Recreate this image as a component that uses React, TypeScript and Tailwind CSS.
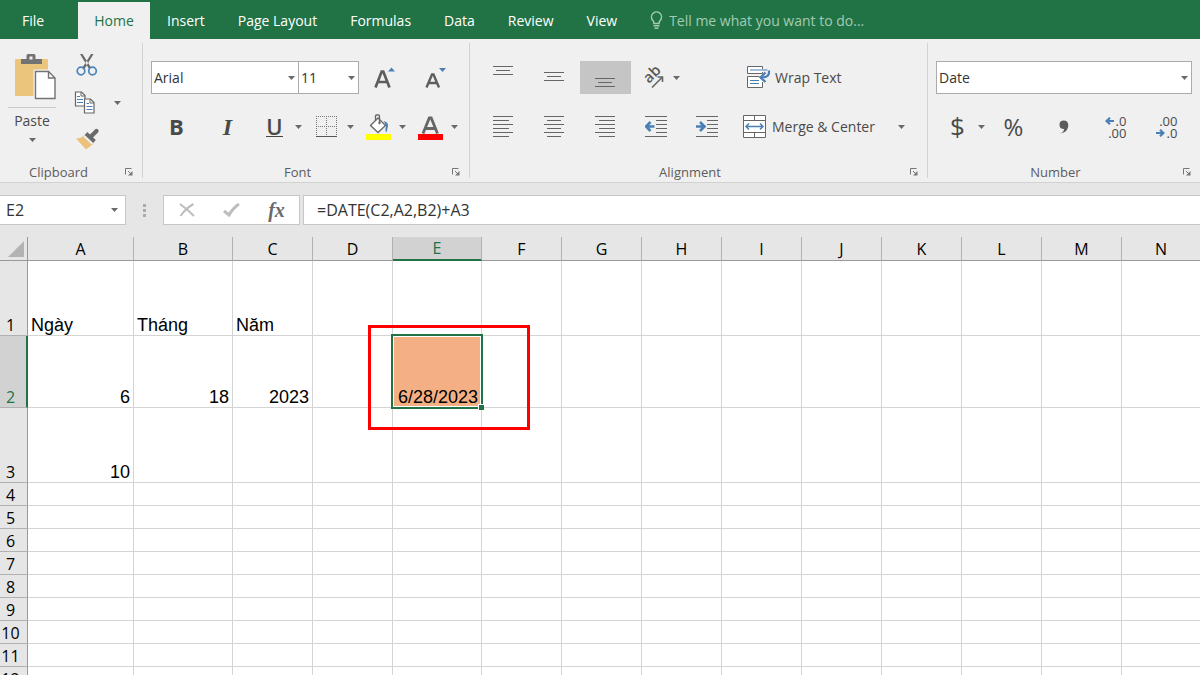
import type { ReactNode } from "react";
import clsx from "clsx";

const tabs = ["Insert", "Page Layout", "Formulas", "Data", "Review", "View"];

const columns = [
  { name: "A", width: "w-[106px]" },
  { name: "B", width: "w-[99px]" },
  { name: "C", width: "w-[80px]" },
  { name: "D", width: "w-[80px]" },
  { name: "E", width: "w-[89px]" },
  { name: "F", width: "w-[80px]" },
  { name: "G", width: "w-[80px]" },
  { name: "H", width: "w-[80px]" },
  { name: "I", width: "w-[80px]" },
  { name: "J", width: "w-[80px]" },
  { name: "K", width: "w-[80px]" },
  { name: "L", width: "w-[80px]" },
  { name: "M", width: "w-[80px]" },
  { name: "N", width: "" },
];

const cells: Record<string, string> = {
  A1: "Ngày",
  B1: "Tháng",
  C1: "Năm",
  A2: "6",
  B2: "18",
  C2: "2023",
  E2: "6/28/2023",
  A3: "10",
};

const rowHeights: Record<number, string> = {
  1: "h-[75px]",
  2: "h-[72px]",
  3: "h-[75px]",
};

function Caret() {
  return (
    <svg width="7" height="4" viewBox="0 0 7 4" className="shrink-0" aria-hidden="true">
      <path d="M0 0h7L3.5 4z" fill="#6a6a6a" />
    </svg>
  );
}

function IconButton({ label, active, children }: { label: string; active?: boolean; children: ReactNode }) {
  return (
    <button
      type="button"
      aria-label={label}
      className={clsx("flex h-[33px] w-[51px] shrink-0 items-center justify-center", active && "bg-[#c5c5c5]")}
    >
      {children}
    </button>
  );
}

// Button with a drop-down arrow on its right edge
function SplitButton({ label, children }: { label: string; children: ReactNode }) {
  return (
    <button type="button" aria-label={label} className="flex h-[33px] w-[52px] shrink-0 items-center">
      <span className="flex w-[43px] justify-center">{children}</span>
      <span className="-ml-px">
        <Caret />
      </span>
    </button>
  );
}

function Picker({ label, value, className }: { label: string; value: string; className?: string }) {
  return (
    <div className={clsx("relative h-[33px]", className)}>
      <select
        aria-label={label}
        className="h-full w-full appearance-none border border-[#ababab] bg-white px-[2px] text-sm text-[#333]"
        defaultValue={value}
      >
        <option>{value}</option>
      </select>
      <span className="pointer-events-none absolute inset-y-0 right-1 flex items-center">
        <Caret />
      </span>
    </div>
  );
}

function Group({ title, className, labelClass, children }: { title: string; className?: string; labelClass?: string; children: ReactNode }) {
  return (
    <section aria-label={title} className={clsx("flex flex-col justify-between", className)}>
      {children}
      <div className="flex h-5 items-center">
        <span className={clsx("flex-1 text-center text-[13px] leading-5 text-[#5c5c5c]", labelClass)}>{title}</span>
        <button type="button" aria-label={`${title} settings`} className="mr-[9px]">
          <svg width="8" height="8" viewBox="0 0 8 8" aria-hidden="true">
            <path d="M.5 6.500V.5h6" fill="none" stroke="#777" />
            <path d="M3 3l3 3" stroke="#777" />
            <path d="M7.500 3v4.500H3z" fill="#777" />
          </svg>
        </button>
      </div>
    </section>
  );
}

function Separator() {
  return <div className="mt-1 mb-1 w-px shrink-0 bg-[#d2d2d2]" />;
}

// Horizontal strokes given as [x1, x2, y]
function Lines({ height = 21, rows }: { height?: number; rows: number[][] }) {
  return (
    <svg width="21" height={height} viewBox={`0 0 21 ${height}`} aria-hidden="true">
      {rows.map(([x1, x2, y]) => (
        <path key={y} d={`M${x1} ${y + 0.5}H${x2}`} stroke="#666" />
      ))}
    </svg>
  );
}

function PasteIcon() {
  return (
    <svg width="42" height="47" viewBox="0 0 42 47" aria-hidden="true">
      <rect x="1" y="6" width="33" height="37" rx="1" fill="#ecc57c" />
      <path d="M7 6h5.500V2.500Q12.500 1 14 1h6q1.500 0 1.500 1.500V6H28v5H7z" fill="#737373" />
      <rect x="15.500" y="3.500" width="3" height="3" fill="#f0f0f0" />
      <path d="M19.500 16.500H36l6.500 6.500v23.500h-23z" fill="#f0f0f0" />
      <path d="M21.500 18.500h13l6.500 6.500v20.500H21.500z" fill="#fff" stroke="#737373" strokeWidth="1.400" />
      <path d="M34.500 18.500v6.500H41" fill="none" stroke="#737373" strokeWidth="1.400" />
    </svg>
  );
}

function CutIcon() {
  return (
    <svg width="22" height="24" viewBox="0 0 22 24" aria-hidden="true">
      <path d="M4 1l2.500 0L15 14.500l-2 1.500zM17.500 1L15 1 6.500 14.500l2 1.500z" fill="#6a6a6a" />
      <circle cx="5" cy="18" r="3.800" fill="none" stroke="#4a84bd" strokeWidth="1.700" />
      <circle cx="16.500" cy="18" r="3.800" fill="none" stroke="#4a84bd" strokeWidth="1.700" />
    </svg>
  );
}

function CopyIcon() {
  return (
    <svg width="22" height="23" viewBox="0 0 22 23" aria-hidden="true">
      <path d="M1.500 1h6L11 4.500V15H1.500z" fill="#fff" stroke="#666" strokeWidth="1.200" />
      <path d="M7 1v4h4" fill="none" stroke="#666" />
      <path d="M3 5.500h3M3 8.500h6M3 11.500h6" stroke="#4a7fb5" />
      <path d="M10.500 8h6l3.500 3.500V22h-9.500z" fill="#fff" stroke="#666" strokeWidth="1.200" />
      <path d="M16 8v4h4" fill="none" stroke="#666" />
      <path d="M12.500 12.500h2.500M12.500 15.500h6M12.500 18.500h6" stroke="#4a7fb5" />
    </svg>
  );
}

function BrushIcon() {
  return (
    <svg width="24" height="22" viewBox="0 0 24 22" aria-hidden="true">
      <path d="M8.500 7L18 15.500 10 21.500 0 10.500q5 0 8.500-3.500z" fill="#ecc17c" />
      <path d="M9.500 6.500l8.500 8" stroke="#f0f0f0" strokeWidth="6" />
      <path d="M10 5.500l8.500 8" stroke="#6a6a6a" strokeWidth="3.800" />
      <path d="M15.500 8l5-5" stroke="#6a6a6a" strokeWidth="4.200" strokeLinecap="round" />
    </svg>
  );
}

function GrowFontIcon({ shrink }: { shrink?: boolean }) {
  return (
    <svg width="21" height="24" viewBox="0 0 21 24" aria-hidden="true">
      {shrink ? (
        <path d="M1.500 21.500L7 8.500h1.500L14 21.500M3.800 17h8" fill="none" stroke="#5e5e5e" strokeWidth="2.400" />
      ) : (
        <path d="M1.500 21.500L7.700 5.500h1.600L15.500 21.500M4.300 16h8.500" fill="none" stroke="#5e5e5e" strokeWidth="2.700" />
      )}
      <path d={shrink ? "M14 2h7l-3.500 4z" : "M14 5.500h7l-3.500-4z"} fill="#4a7fb5" />
    </svg>
  );
}

function BordersIcon() {
  return (
    <svg width="21" height="21" viewBox="0 0 21 21" aria-hidden="true">
      <path d="M0 .5h21M0 10.500h21M.5 0v20M10.500 0v20M20.500 0v20" stroke="#777" strokeDasharray="1 1" />
      <path d="M0 20.500h21" stroke="#555" />
    </svg>
  );
}

function FillIcon() {
  return (
    <svg width="25" height="26" viewBox="0 0 25 26" aria-hidden="true">
      <path d="M4.500 11.500L12 4l7.500 7.500-7.500 7z" fill="#fff" stroke="#666" strokeWidth="1.300" />
      <path d="M9.500 7V2q0-1 1-1h2q1 0 1 1v7" fill="none" stroke="#666" strokeWidth="1.300" />
      <circle cx="13.500" cy="9" r="1.200" fill="#666" />
      <path d="M17.500 7q5 1 4.500 5l-1.500 6.500q-1.500-1-1-4 1.500-3-2-7.500z" fill="#4a7fb5" />
      <rect y="20" width="25" height="6" fill="#ff0" />
    </svg>
  );
}

function FontColorIcon() {
  return (
    <svg width="25" height="26" viewBox="0 0 25 26" aria-hidden="true">
      <path d="M5 19.500L11.300 4h1.900l6.300 15.500M8 14.500h9" fill="none" stroke="#666" strokeWidth="2.800" />
      <rect y="20" width="25" height="6" fill="#f00" />
    </svg>
  );
}

function OrientationIcon() {
  return (
    <svg width="22" height="22" viewBox="0 0 22 22" className="overflow-visible" aria-hidden="true">
      <text transform="translate(7 17) rotate(-45)" className="fill-[#5a5a5a] text-[15px] font-semibold">
        ab
      </text>
      <path d="M10 20.500L20 10.500M20.500 15V10h-5" fill="none" stroke="#666" strokeWidth="1.600" />
    </svg>
  );
}

function WrapIcon() {
  return (
    <svg width="24" height="23" viewBox="0 0 24 23" aria-hidden="true">
      <path d="M15.500 3V.5H.5v7h15V6M15.500 16v5.500H.5v-11h12" fill="#fff" stroke="#666" />
      <path d="M3 4h17.500M3 14.500h9M3 17.500h9" stroke="#4a7fb5" />
      <path d="M22 4.500q1 7-7 7" fill="none" stroke="#4a7fb5" strokeWidth="2.200" />
      <path d="M18.500 6.500l-5 5 5 4.500" fill="none" stroke="#4a7fb5" strokeWidth="2.200" />
    </svg>
  );
}

function MergeIcon() {
  return (
    <svg width="24" height="23" viewBox="0 0 24 23" aria-hidden="true">
      <path d="M.5.500h22v22H.5zM.5 5.500h22M.5 17.500h22M11.500.500v5M11.500 17.500v5" fill="#fff" stroke="#666" />
      <path d="M3 11.500h17M6 8.500l-3 3 3 3M17 8.500l3 3-3 3" fill="none" stroke="#4a7fb5" strokeWidth="1.500" />
    </svg>
  );
}

function IndentIcon({ increase }: { increase?: boolean }) {
  return (
    <svg width="23" height="21" viewBox="0 0 23 21" aria-hidden="true">
      <path d="M0 .5h22M11 4.500h11M11 8.500h11M11 12.500h11M11 16.500h11M0 20.500h22" stroke="#666" />
      <path
        d={increase ? "M0 10.500h8M4 6l4.500 4.500L4 15" : "M9.500 10.500h-8M5.500 6L1 10.500 5.500 15"}
        fill="none"
        stroke="#4a7fb5"
        strokeWidth="2.600"
      />
    </svg>
  );
}

function DecimalArrow({ right }: { right?: boolean }) {
  return (
    <svg width="9" height="8" viewBox="0 0 9 8" aria-hidden="true">
      <path d={right ? "M0 4h7M4 .8L7.500 4 4 7.200" : "M9 4H2M5 .8L1.500 4 5 7.200"} fill="none" stroke="#4a7fb5" strokeWidth="2.200" />
    </svg>
  );
}

function TabBar() {
  return (
    <nav className="flex h-[39px] shrink-0 items-stretch gap-px bg-[#217346] text-sm text-white" aria-label="Ribbon tabs">
      <button type="button" className="w-[77px] pt-[2px] pr-[11px]">File</button>
      <button type="button" className="mt-[2px] w-[72px] bg-[#f0f0f0] text-[#217346]">Home</button>
      {tabs.map((tab) => (
        <button key={tab} type="button" className="px-4 pt-[2px]">
          {tab}
        </button>
      ))}
      <label className="ml-4 flex flex-1 items-center gap-[6px] pt-[2px]">
        <svg width="13" height="19" viewBox="0 0 13 19" aria-hidden="true">
          <path d="M4 12.500q0-2-1.500-3.500A5 5 0 1 1 10.500 9Q9 10.500 9 12.500z" fill="none" stroke="#a3cbb2" strokeWidth="1.500" />
          <path d="M3.500 14h6v1.500h-6zM4 16.500h5l-1 1.500H5z" fill="#a3cbb2" />
        </svg>
        <input
          aria-label="Tell me what you want to do"
          placeholder="Tell me what you want to do..."
          className="flex-1 bg-transparent outline-none placeholder:text-[#a3cbb2]"
        />
      </label>
    </nav>
  );
}

function Ribbon() {
  return (
    <div className="flex h-[144px] shrink-0 border-b border-[#d2d2d2] bg-[#f0f0f0] text-[#4a4a4a]">
      <Group title="Clipboard" className="w-[142px]" labelClass="pr-2">
        <div className="flex pt-[14px] pl-2">
          <button type="button" className="flex w-12 flex-col items-center text-sm">
            <span className="flex w-full justify-end border-b border-[#c8c8c8] pb-[7px]">
              <PasteIcon />
            </span>
            <span className="py-[3px] leading-5">Paste</span>
            <span className="pt-1">
              <Caret />
            </span>
          </button>
          <div className="ml-[18px] flex flex-col items-start gap-[14px]">
            <button type="button" aria-label="Cut" className="pl-[2px]"><CutIcon /></button>
            <button type="button" aria-label="Copy" className="flex items-center gap-[18px]">
              <CopyIcon />
              <Caret />
            </button>
            <button type="button" aria-label="Format Painter" className="pl-[2px]"><BrushIcon /></button>
          </div>
        </div>
      </Group>
      <Separator />
      <Group title="Font" className="w-[326px]">
        <div className="flex flex-col gap-4 pt-[22px] pl-2">
          <div className="flex">
            <Picker label="Font" value="Arial" className="w-[148px]" />
            <Picker label="Font size" value="11" className="-ml-px w-[61px]" />
            <IconButton label="Increase font size"><GrowFontIcon /></IconButton>
            <IconButton label="Decrease font size"><GrowFontIcon shrink /></IconButton>
          </div>
          <div className="flex">
            <IconButton label="Bold"><b className="text-[22px]">B</b></IconButton>
            <IconButton label="Italic">
              <b className="font-[Liberation_Serif,serif] text-2xl italic">I</b>
            </IconButton>
            <SplitButton label="Underline">
              <span className="border-b border-[#444] text-[22px] leading-5 font-semibold">U</span>
            </SplitButton>
            <SplitButton label="Borders"><BordersIcon /></SplitButton>
            <SplitButton label="Fill color"><FillIcon /></SplitButton>
            <SplitButton label="Font color"><FontColorIcon /></SplitButton>
          </div>
        </div>
      </Group>
      <Separator />
      <Group title="Alignment" className="w-[457px]">
        <div className="flex pt-[22px] pl-2">
          <div className="flex flex-col gap-4">
            <div className="flex">
              <IconButton label="Top align"><Lines height={25} rows={[[0, 20, 1], [3, 17, 5], [0, 20, 9]]} /></IconButton>
              <IconButton label="Middle align"><Lines rows={[[0, 20, 5], [3, 17, 9], [0, 20, 13]]} /></IconButton>
              <IconButton label="Bottom align" active><Lines rows={[[0, 20, 11], [3, 17, 15], [0, 20, 19]]} /></IconButton>
              <SplitButton label="Orientation"><OrientationIcon /></SplitButton>
            </div>
            <div className="flex">
              <IconButton label="Align left"><Lines rows={[[0, 20, 0], [0, 16, 4], [0, 20, 8], [0, 16, 12], [0, 20, 16], [0, 16, 20]]} /></IconButton>
              <IconButton label="Center"><Lines rows={[[0, 20, 0], [3, 17, 4], [0, 20, 8], [3, 17, 12], [0, 20, 16], [3, 17, 20]]} /></IconButton>
              <IconButton label="Align right"><Lines rows={[[0, 20, 0], [4, 20, 4], [0, 20, 8], [4, 20, 12], [0, 20, 16], [4, 20, 20]]} /></IconButton>
              <IconButton label="Decrease indent"><IndentIcon /></IconButton>
              <IconButton label="Increase indent"><IndentIcon increase /></IconButton>
            </div>
          </div>
          <div className="ml-[10px] flex flex-1 flex-col gap-4 text-sm">
            <button type="button" className="flex h-[33px] items-center gap-1 pl-1">
              <WrapIcon />
              Wrap Text
            </button>
            <button type="button" className="flex h-[33px] items-center gap-[5px] pr-[22px]">
              <MergeIcon />
              <span className="flex-1 text-left">Merge &amp; Center</span>
              <Caret />
            </button>
          </div>
        </div>
      </Group>
      <Separator />
      <Group title="Number" className="flex-1">
        <div className="flex flex-col gap-4 px-2 pt-[22px]">
          <Picker label="Number format" value="Date" />
          <div className="flex">
            <SplitButton label="Accounting format"><span className="text-[26px]">$</span></SplitButton>
            <IconButton label="Percent style"><span className="text-2xl">%</span></IconButton>
            <IconButton label="Comma style">
              <svg width="11" height="14" viewBox="0 0 11 14" aria-hidden="true">
                <path d="M1 13.500q4-1.500 4-4.500Q.5 9 .5 4.700.5.500 4.700.500 9.300.500 9.300 5.500q0 6.500-8 8z" fill="#5c5c5c" />
              </svg>
            </IconButton>
            <IconButton label="Increase decimal">
              <span className="flex flex-col items-end text-[13px] leading-3">
                <span className="flex items-center gap-[2px]"><DecimalArrow />.0</span>
                <span>.00</span>
              </span>
            </IconButton>
            <IconButton label="Decrease decimal">
              <span className="flex flex-col items-end text-[13px] leading-3">
                <span>.00</span>
                <span className="flex items-center gap-[2px]"><DecimalArrow right />.0</span>
              </span>
            </IconButton>
          </div>
        </div>
      </Group>
    </div>
  );
}

function FormulaBar() {
  return (
    <div className="flex h-[54px] shrink-0 items-center text-[#333]">
      <div className="relative h-[30px] w-[126px]">
        <input
          aria-label="Name box"
          defaultValue="E2"
          className="h-full w-full border border-l-0 border-[#c6c6c6] bg-white px-[6px] text-base outline-none"
        />
        <span className="pointer-events-none absolute inset-y-0 right-2 flex items-center">
          <Caret />
        </span>
      </div>
      <div className="flex w-[37px] flex-col items-center gap-[2px]">
        <i className="size-[3px] bg-[#ababab]" />
        <i className="size-[3px] bg-[#ababab]" />
        <i className="size-[3px] bg-[#ababab]" />
      </div>
      <div className="grid h-[30px] w-[137px] grid-cols-3 border border-[#c6c6c6] bg-white">
        <button type="button" aria-label="Cancel" className="flex items-center justify-center">
          <svg width="16" height="14" viewBox="0 0 16 14" aria-hidden="true">
            <path d="M1 1q7 5 14 12M14.500 1Q7 5 1.500 13" fill="none" stroke="#bdbdbd" strokeWidth="2" />
          </svg>
        </button>
        <button type="button" aria-label="Enter" className="flex items-center justify-center">
          <svg width="17" height="14" viewBox="0 0 17 14" aria-hidden="true">
            <path d="M1 8l5 4Q10 5 16 1" fill="none" stroke="#bdbdbd" strokeWidth="3" />
          </svg>
        </button>
        <button type="button" aria-label="Insert function" className="font-[Liberation_Serif,serif] text-xl leading-5 font-bold text-[#6a6a6a] italic">
          fx
        </button>
      </div>
      <input
        aria-label="Formula"
        defaultValue="=DATE(C2,A2,B2)+A3"
        className="ml-[3px] h-[30px] flex-1 border border-r-0 border-[#c6c6c6] bg-white px-[13px] text-base outline-none"
      />
    </div>
  );
}

function Sheet() {
  return (
    <div className="min-h-0 flex-1 overflow-hidden">
      <table className="w-full table-fixed border-separate border-spacing-0 bg-white text-black">
        <colgroup>
          <col className="w-7" />
          {columns.map((col) => (
            <col key={col.name} className={col.width} />
          ))}
        </colgroup>
        <thead className="bg-[#e6e6e6]">
          <tr className="h-6">
            <th aria-label="Select all" className="border-r border-b border-[#999] p-0 pr-[3px] pb-[3px] align-bottom">
              <svg width="16" height="16" viewBox="0 0 16 16" className="ml-auto" aria-hidden="true">
                <path d="M16 0v16H0z" fill="#b3b3b3" />
              </svg>
            </th>
            {columns.map(({ name }) => (
              <th
                key={name}
                scope="col"
                className={clsx(
                  "p-0 text-base leading-5 font-normal",
                  name !== "N" && "border-r border-r-[#b1b1b1]",
                  name === "E" ? "border-b-2 border-b-[#217346] bg-[#d2d2d2] text-[#217346]" : "border-b border-b-[#999]",
                )}
              >
                {name}
              </th>
            ))}
          </tr>
        </thead>
        <tbody>
          {Array.from({ length: 12 }, (_, i) => i + 1).map((row) => (
            <tr key={row} className={rowHeights[row] ?? "h-[23px]"}>
              <th
                scope="row"
                className={clsx(
                  "border-b border-b-[#b1b1b1] p-0 align-bottom text-base leading-5 font-normal",
                  row === 2
                    ? "border-r-2 border-r-[#217346] bg-[#d2d2d2] pr-[5px] text-[#217346]"
                    : "border-r border-r-[#999] bg-[#e6e6e6] pr-[6px]",
                )}
              >
                {row}
              </th>
              {columns.map(({ name }) => {
                const id = `${name}${row}`;
                const selected = id === "E2";
                return (
                  <td
                    key={id}
                    className={clsx(
                      "border-b border-[#d4d4d4] px-[3px] py-0 align-bottom font-[Liberation_Sans,sans-serif] text-lg leading-5",
                      name !== "N" && "border-r",
                      row > 1 && "text-right",
                      selected && "relative bg-[#f4b084]",
                    )}
                  >
                    {cells[id]}
                    {selected && (
                      <>
                        {/* selection frame, fill handle and red callout */}
                        <span className="absolute -inset-[2px] border-2 border-[#217346] inset-shadow-[0_0_0_1px_#fff]" />
                        <span className="absolute -right-[3px] -bottom-[3px] size-[6px] border-t border-l border-white bg-[#217346]" />
                        <span className="absolute -top-[11px] -right-[49px] -bottom-[23px] -left-[25px] border-[3px] border-[#f00]" />
                      </>
                    )}
                  </td>
                );
              })}
            </tr>
          ))}
        </tbody>
      </table>
    </div>
  );
}

export default function App() {
  return (
    <div className="flex h-screen flex-col overflow-hidden bg-[#e6e6e6] font-[Open_Sans,sans-serif]">
      <TabBar />
      <Ribbon />
      <FormulaBar />
      <Sheet />
    </div>
  );
}
